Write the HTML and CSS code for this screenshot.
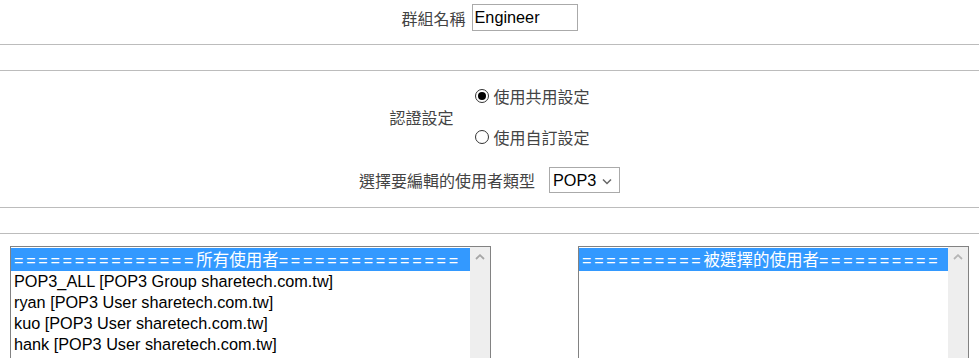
FILE: index.html
```html
<!DOCTYPE html>
<html lang="zh-Hant">
<head>
    <meta charset="UTF-8">
    <meta name="viewport" content="width=device-width, initial-scale=1.0">
    <title>群組設定</title>
    <link rel="stylesheet" href="styles.css">
</head>
<body>
<div class="form-row name-row">
    <label class="field-label" for="groupName">群組名稱</label>
    <input class="text-input" id="groupName" type="text" value="Engineer">
</div>

<div class="rule"></div>
<div class="blank"></div>
<div class="rule"></div>

<div class="form-row auth-row">
    <span class="field-label">認證設定</span>
    <div class="radio-group">
        <label class="radio-option"><span class="radio checked"></span>使用共用設定</label>
        <label class="radio-option"><span class="radio"></span>使用自訂設定</label>
    </div>
</div>

<div class="form-row type-row">
    <span class="field-label">選擇要編輯的使用者類型</span>
    <div class="select-box">
        <span>POP3</span>
        <svg class="chevron" width="10" height="7" viewBox="0 0 10 7"><path d="M1 1.5 L5 5.5 L9 1.5" fill="none" stroke="#666" stroke-width="1.5"/></svg>
    </div>
</div>

<div class="rule"></div>
<div class="blank"></div>
<div class="rule"></div>

<div class="lists">
    <div class="listbox all-users">
        <div class="options">
            <div class="option selected"><span class="eq">===============</span>所有使用者<span class="eq">===============</span></div>
            <div class="option">POP3_ALL [POP3 Group sharetech.com.tw]</div>
            <div class="option">ryan [POP3 User sharetech.com.tw]</div>
            <div class="option">kuo [POP3 User sharetech.com.tw]</div>
            <div class="option">hank [POP3 User sharetech.com.tw]</div>
        </div>
        <div class="scrollbar">
            <svg width="10" height="6" viewBox="0 0 10 6"><path d="M1 5 L5 1.2 L9 5" fill="none" stroke="#a6a6a6" stroke-width="1.8"/></svg>
        </div>
    </div>
    <div class="listbox picked-users">
        <div class="options">
            <div class="option selected"><span class="eq">==========</span>被選擇的使用者<span class="eq">==========</span></div>
        </div>
        <div class="scrollbar">
            <svg width="10" height="6" viewBox="0 0 10 6"><path d="M1 5 L5 1.2 L9 5" fill="none" stroke="#b5b5b5" stroke-width="1.8"/></svg>
        </div>
    </div>
</div>
</body>
</html>
```

FILE: styles.css
```css
* {
    margin: 0;
    padding: 0;
    box-sizing: border-box;
}

body {
    font-family: "Liberation Sans", "Noto Sans CJK TC", sans-serif;
    font-size: 16.25px;
    color: #000;
    background: #fff;
    overflow: hidden;
}

.rule {
    border-top: 1px solid #bcbcbc;
}

.blank {
    height: 25px;
}

.form-row {
    display: flex;
    justify-content: center;
    align-items: center;
}

.field-label {
    font-family: "Noto Sans CJK TC", sans-serif;
    font-size: 16px;
    color: #444;
    line-height: 20px;
}

.name-row {
    gap: 6px;
    padding: 4px 0 13px;
}

.text-input {
    width: 106px;
    height: 27px;
    border: 1px solid #aaa;
    padding: 0 2px;
    font-family: "Liberation Sans", sans-serif;
    font-size: 16.25px;
    color: #000;
    outline: none;
}

.auth-row {
    gap: 21px;
    padding-top: 15px;
}

.radio-group {
    display: flex;
    flex-direction: column;
    gap: 21px;
}

.radio-option {
    display: flex;
    align-items: center;
    height: 20px;
    font-family: "Noto Sans CJK TC", sans-serif;
    font-size: 16px;
    color: #444;
}

.radio {
    width: 14px;
    height: 14px;
    border: 1px solid #333;
    border-radius: 50%;
    margin-right: 5px;
    display: flex;
    align-items: center;
    justify-content: center;
}

.radio.checked::after {
    content: "";
    width: 8px;
    height: 8px;
    border-radius: 50%;
    background: #000;
}

.type-row {
    gap: 14px;
    margin-top: 20px;
    padding-bottom: 14px;
}

.select-box {
    width: 71px;
    height: 26px;
    border: 1px solid #aaa;
    display: flex;
    align-items: center;
    justify-content: space-between;
    padding: 0 7px 0 3px;
}

.chevron {
    margin-top: 2px;
}

.lists {
    display: flex;
    gap: 87px;
    padding: 12px 0 0 10px;
}

.listbox {
    display: flex;
    height: 170px;
    border: 1px solid #828282;
}

.all-users {
    width: 481px;
}

.picked-users {
    width: 391px;
}

.options {
    flex: 1;
    padding-top: 1px;
}

.option {
    height: 21px;
    line-height: 21px;
    padding-left: 3px;
    white-space: nowrap;
    overflow: hidden;
}

.option.selected {
    height: 23px;
    line-height: 23px;
    background: #3399ff;
    color: #fff;
    font-family: "Noto Sans CJK TC", sans-serif;
    font-size: 16.5px;
}

.eq {
    font-family: "Liberation Sans", sans-serif;
    font-size: 16px;
    letter-spacing: 2.8px;
}

.scrollbar {
    width: 20px;
    background: #eeeeee;
    display: flex;
    justify-content: center;
    align-items: flex-start;
    padding-top: 7px;
}
```
